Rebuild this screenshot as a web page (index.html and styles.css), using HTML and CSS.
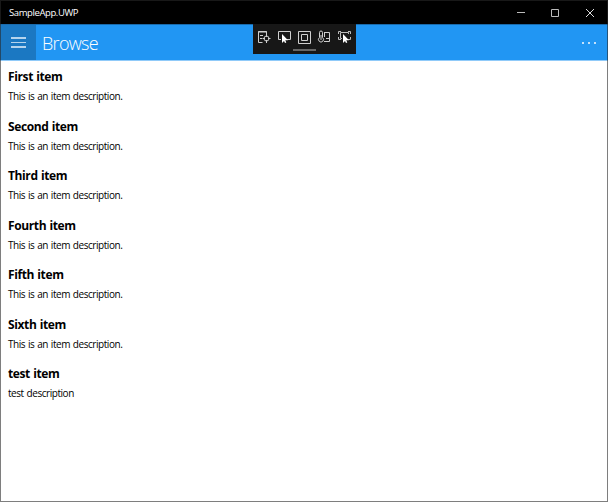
FILE: index.html
```html
<!DOCTYPE html>
<html lang="en">
<head>
<meta charset="utf-8">
<title>SampleApp.UWP</title>
<link rel="stylesheet" href="styles.css">
</head>
<body>
<div class="window">
  <header class="titlebar">
    <span class="app-name">SampleApp.UWP</span>
    <svg class="controls" width="104" height="24" viewBox="0 0 104 24" fill="none" stroke="#bbb">
      <path d="M13 12.500h8M47.500 9.500h7v7h-7z"/><path d="M82 9l8 8M90 9l-8 8" stroke="#ddd"/>
    </svg>
  </header>
  <nav class="appbar">
    <div class="menu"><i></i><i></i><i></i></div>
    <h1>Browse</h1>
    <div class="more"><i></i><i></i><i></i></div>
  </nav>
  <div class="debugbar">
    <svg width="103" height="30" viewBox="0 0 103 30" fill="none" stroke="#cfcfcf">
      <g>
        <path d="M5.500 18.500v-11h8v3M5.500 18.500h4M5 8h9M7 11.500h3M7 14.500h2"/>
        <circle cx="13.500" cy="14.500" r="2.500"/>
        <path d="M13.500 10v3M13.500 16v3M9.500 14.500h2.500M15 14.500h2.500"/>
      </g>
      <path d="M28 15.500h-2.500v-8h12v8H34"/>
      <path d="M29 10v9l2-2 1 2 1.300-.6-1-2.200H35z" fill="#fff" stroke="none"/>
      <path d="M45.500 7.500h12v12h-12zM48.500 10.500h6v6h-6z"/>
      <path d="M66.500 13.500v-5a1.500 1.500 0 0 1 3 0v5a2.500 2.500 0 1 1-3 0zM68 11v5"/>
      <path d="M71.500 8.500h5v9H71M71.500 8v5M73 14.500h3"/>
      <path d="M87.500 8.500h8v6h-8zM85.500 10V7.500H88M95 7.500h2.500V10M85.500 13v2.500H88M97.500 13v2.500H95" stroke="#bbb"/>
      <path d="M89 10h7v5h-7z" fill="#171717" stroke="none"/>
      <path d="M90 10v9l2-2 1 2 1.300-.6-1-2.200H96z" fill="#fff" stroke="none"/>
      <path d="M40 26h23" stroke="#666" stroke-width="2"/>
    </svg>
  </div>
  <main class="list">
    <article><h2>First item</h2><p>This is an item description.</p></article>
    <article><h2>Second item</h2><p>This is an item description.</p></article>
    <article><h2>Third item</h2><p>This is an item description.</p></article>
    <article><h2>Fourth item</h2><p>This is an item description.</p></article>
    <article><h2>Fifth item</h2><p>This is an item description.</p></article>
    <article><h2>Sixth item</h2><p>This is an item description.</p></article>
    <article><h2>test item</h2><p>test description</p></article>
  </main>
</div>
</body>
</html>
```
FILE: styles.css
```css
* { box-sizing: border-box; margin: 0; padding: 0; }
body { font-family: "Open Sans", "Noto Sans", sans-serif; color: #000; }
.window {
  position: relative;
  width: 608px;
  height: 502px;
  background: #fff;
  overflow: hidden;
}
/* translucent window frame */
.window::after {
  content: "";
  position: absolute;
  inset: 0;
  border: 1px solid rgba(40, 40, 40, 0.6);
  pointer-events: none;
}
.titlebar {
  display: flex;
  justify-content: space-between;
  height: 24px;
  background: #000;
  color: #fff;
  padding: 0 0 0 9px;
}
.app-name { font-size: 9.5px; line-height: 26px; letter-spacing: -0.4px; }
.controls { display: block; }
.appbar {
  display: flex;
  align-items: center;
  height: 37px;
  background: #2196f3;
  color: #fff;
  border-top: 1px solid #1a6aab;
  border-bottom: 1px solid #90caf9;
}
.menu {
  width: 36px;
  height: 35px;
  background: #1b78c2;
  display: flex;
  flex-direction: column;
  align-items: center;
  justify-content: center;
  gap: 3px;
}
.menu i { width: 15px; height: 1.4px; background: #b5d4ed; }
h1 { font-size: 18px; font-weight: 300; line-height: 35px; letter-spacing: -0.7px; margin: 1px 0 0 6px; flex: 1; }
.more { display: flex; gap: 4px; margin-right: 12px; }
.more i { width: 2px; height: 2px; background: #c3e1fb; }
.debugbar { position: absolute; left: 253px; top: 24px; width: 103px; height: 30px; background: #171717; }
.debugbar svg { display: block; }
.list { padding: 7px 8px 0; }
article { height: 49.5px; }
h2 { font-size: 12px; font-weight: 700; line-height: 18px; letter-spacing: -0.38px; word-spacing: 0.5px; }
p { font-size: 10px; line-height: 20px; letter-spacing: -0.45px; word-spacing: 0.7px; }
```
